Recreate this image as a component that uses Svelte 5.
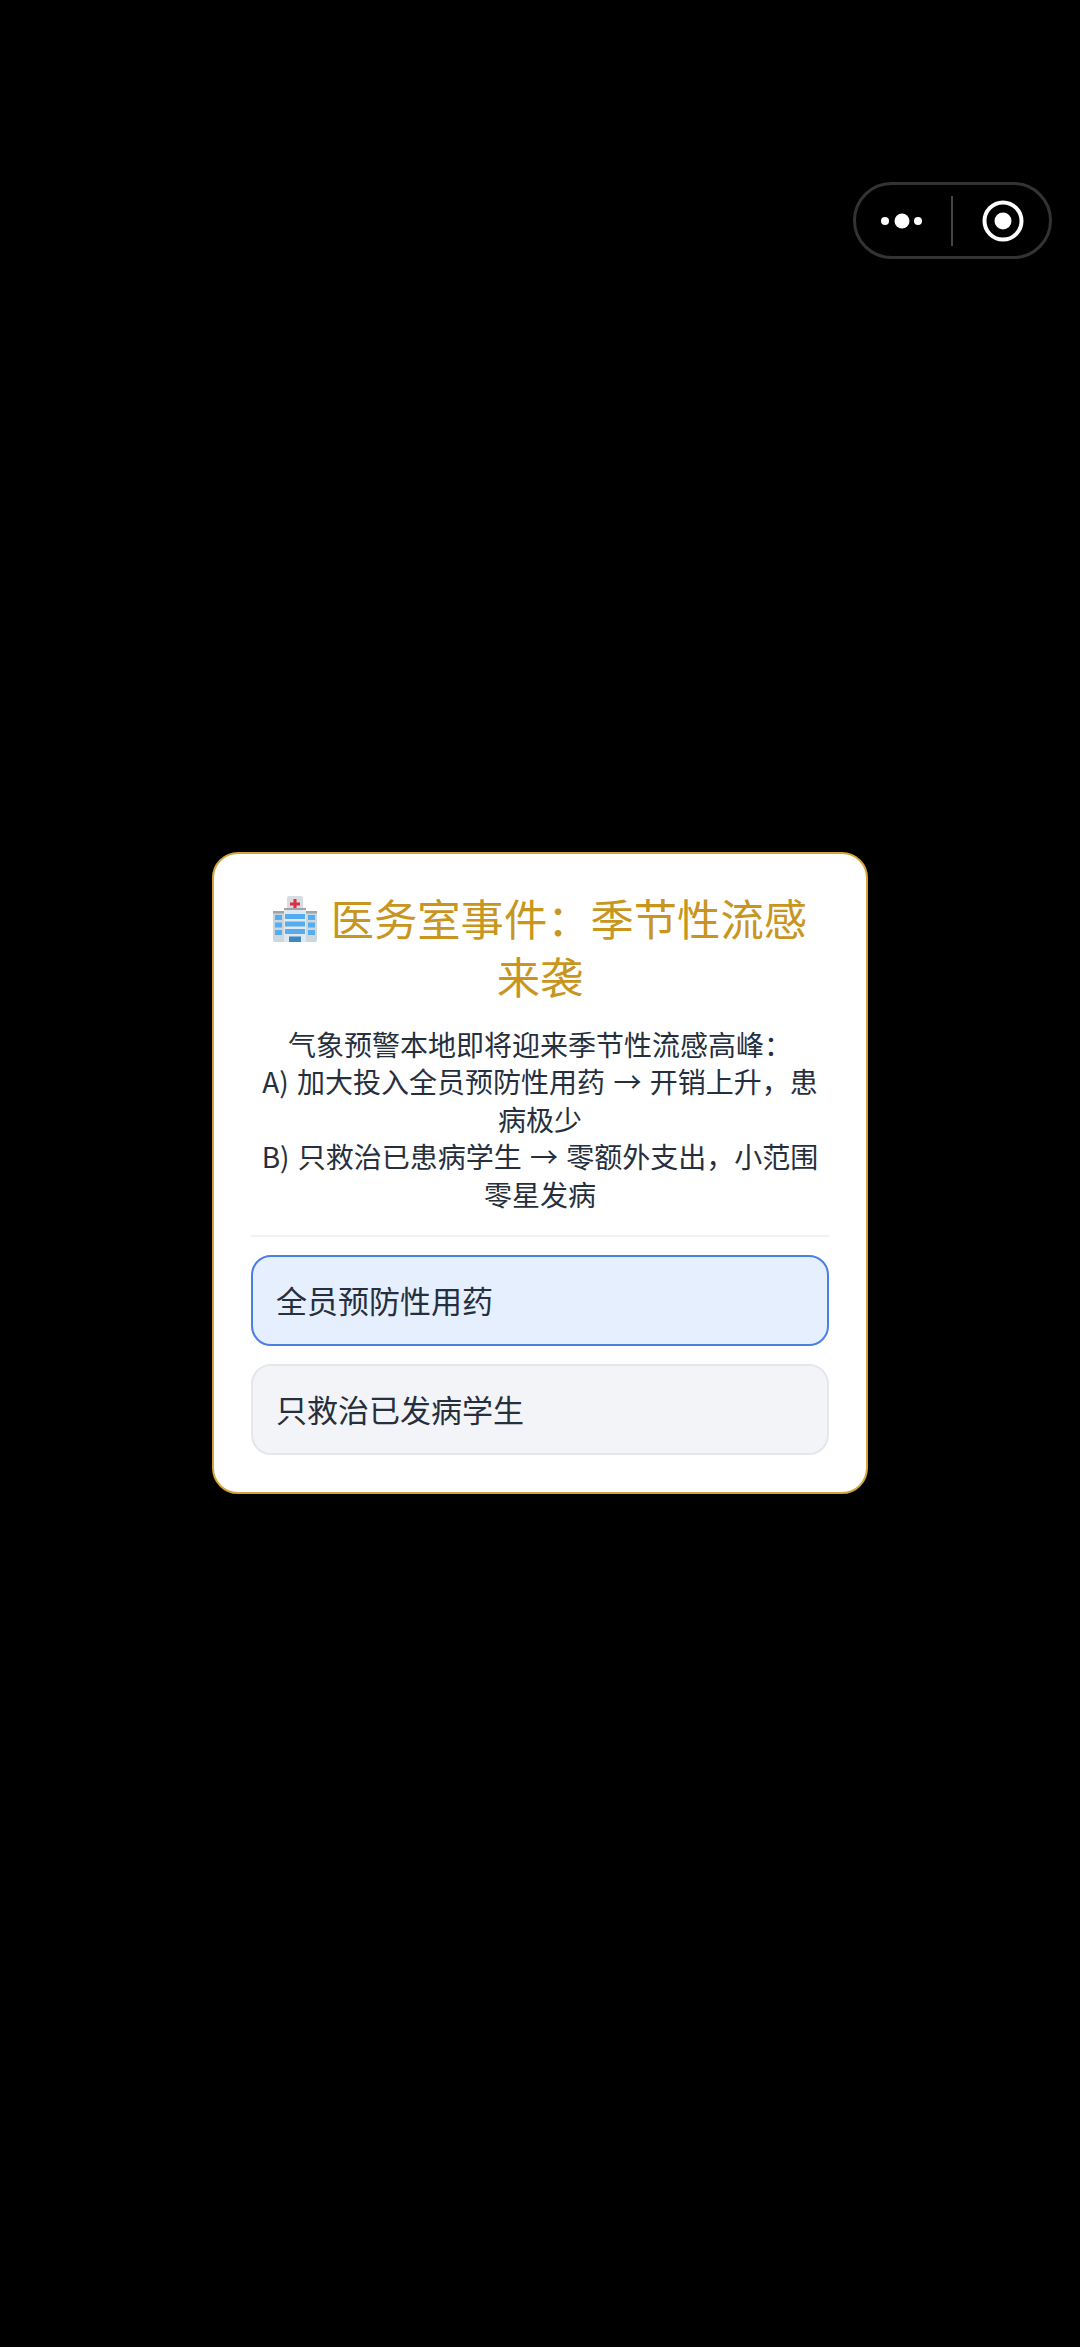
<script>
  const options = [
    { label: '全员预防性用药', selected: true },
    { label: '只救治已发病学生', selected: false }
  ];
</script>

<div class="page">
  <div class="capsule">
    <svg width="199" height="77" viewBox="0 0 199 77" aria-hidden="true">
      <rect x="1.5" y="1.5" width="196" height="74" rx="37" fill="#000" stroke="#333" stroke-width="3" />
      <circle cx="32" cy="39" r="4" fill="#fff" />
      <circle cx="49" cy="39" r="7.5" fill="#fff" />
      <circle cx="65" cy="39" r="4" fill="#fff" />
      <rect x="98" y="14" width="2" height="50" fill="#444" />
      <circle cx="150" cy="39" r="18.5" fill="none" stroke="#fff" stroke-width="4" />
      <circle cx="150" cy="39" r="8.5" fill="#fff" />
    </svg>
  </div>

  <section class="card">
    <h1>
      <svg class="hospital" width="44" height="46" viewBox="0 0 44 46" aria-hidden="true">
        <rect x="14" y="0" width="16" height="16" rx="2" fill="#d8dde1" />
        <rect x="20.5" y="3" width="3" height="10" fill="#dd2e44" />
        <rect x="17" y="6.5" width="10" height="3" fill="#dd2e44" />
        <rect x="11" y="12" width="22" height="3" fill="#9aa5ad" />
        <rect x="0" y="15" width="44" height="31" rx="2" fill="#ccd6dd" />
        <rect x="0" y="15" width="44" height="2.5" fill="#9aa5ad" />
        <rect x="11" y="14" width="22" height="32" fill="#e1e8ed" />
        <rect x="12" y="18" width="20" height="5" fill="#55acee" />
        <rect x="12" y="25.5" width="20" height="5" fill="#55acee" />
        <rect x="12" y="33" width="20" height="5" fill="#55acee" />
        <rect x="2" y="19" width="7" height="5" fill="#55acee" />
        <rect x="2" y="26.5" width="7" height="5" fill="#55acee" />
        <rect x="2" y="34" width="7" height="5" fill="#55acee" />
        <rect x="35" y="19" width="7" height="5" fill="#55acee" />
        <rect x="35" y="26.5" width="7" height="5" fill="#55acee" />
        <rect x="35" y="34" width="7" height="5" fill="#55acee" />
        <rect x="16" y="40.5" width="12" height="5.5" fill="#3b88c3" />
      </svg>
      医务室事件：季节性流感<br />来袭
    </h1>
    <p class="body">气象预警本地即将迎来季节性流感高峰：<br />A) 加大投入全员预防性用药 → 开销上升，患<br />病极少<br />B) 只救治已患病学生 → 零额外支出，小范围<br />零星发病</p>
    <div class="options">
      {#each options as option}
        <button class="option" class:selected={option.selected} type="button"><span class="label">{option.label}</span></button>
      {/each}
    </div>
  </section>
</div>

<style>
  :global(body) {
    margin: 0;
    background: #000;
  }

  .page {
    position: relative;
    box-sizing: border-box;
    height: 2347px;
    padding: 852px 212px 0;
    background: #000;
    font-family: "Noto Sans CJK SC", "Noto Sans", sans-serif;
  }

  .capsule {
    position: absolute;
    top: 182px;
    left: 853px;
    width: 199px;
    height: 77px;
  }

  .capsule svg {
    display: block;
  }

  .card {
    box-sizing: border-box;
    width: 656px;
    height: 642px;
    padding: 34px 37px 0;
    border: 2px solid #d2a43a;
    border-radius: 26px;
    background: #fff;
  }

  h1 {
    margin: 0;
    color: #c8961e;
    font-size: 43.3px;
    font-weight: 400;
    line-height: 58px;
    text-align: center;
  }

  .hospital {
    display: inline-block;
    vertical-align: -6px;
    margin-right: 4px;
  }

  .body {
    margin: 22px 0 0;
    padding-bottom: 22px;
    border-bottom: 2px solid #f1f2f4;
    color: #262f3d;
    font-size: 28px;
    line-height: 37.4px;
    text-align: center;
    word-spacing: 2px;
  }

  .options {
    display: flex;
    flex-direction: column;
    gap: 18px;
    margin-top: 18px;
  }

  .option {
    display: flex;
    align-items: center;
    box-sizing: border-box;
    height: 91px;
    padding: 0 23px 2px;
    border: 2px solid #e5e7eb;
    border-radius: 20px;
    background: #f3f4f8;
    font: inherit;
    font-size: 31px;
    text-align: left;
  }

  .label {
    color: #262f3d;
  }

  .option.selected {
    border-color: #4a80e4;
    background: #e6effd;
  }
</style>
